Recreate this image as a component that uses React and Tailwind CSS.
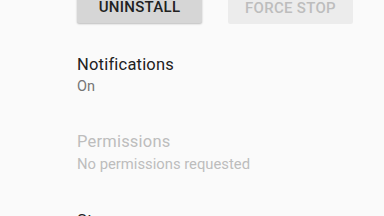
export default function App() {
  return (
    <div className="w-[384px] h-[216px] overflow-hidden bg-[#fafafa] font-['Roboto',sans-serif]">
      <div className="flex gap-[26px] pl-[77px] -mt-[13px]">
        <button className="w-[125px] h-[36px] pt-[5px] rounded-[2px] bg-[#d6d6d6] shadow-[0_1px_2px_rgba(0,0,0,0.25)] text-[15px] font-medium text-[#212121] tracking-[0.3px]">
          UNINSTALL
        </button>
        <button className="w-[125px] h-[37px] pt-[5px] rounded-[2px] bg-[#ececec] text-[15px] font-medium text-[#bdbdbd] tracking-[0.3px]">
          FORCE STOP
        </button>
      </div>

      <div className="pl-[77px] pt-[29px] flex flex-col">
        <div className="flex flex-col">
          <span className="text-[16.5px] leading-[24px] text-[#212121] tracking-[0.2px]">Notifications</span>
          <span className="text-[14.5px] leading-[20px] text-[#757575]">On</span>
        </div>
        <div className="flex flex-col mt-[33px]">
          <span className="text-[16.5px] leading-[24px] text-[#bdbdbd] tracking-[0.2px]">Permissions</span>
          <span className="text-[14.8px] leading-[21px] text-[#bdbdbd]">No permissions requested</span>
        </div>
        <div className="flex flex-col mt-[34px]">
          <span className="text-[16.5px] leading-[24px] text-[#212121] tracking-[0.2px]">Storage</span>
        </div>
      </div>
    </div>
  );
}
